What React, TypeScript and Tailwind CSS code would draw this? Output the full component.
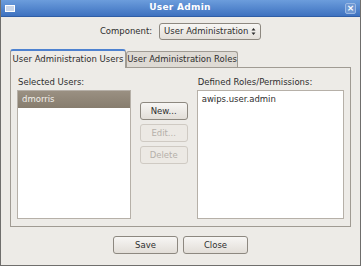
import React from "react";

const font = { fontFamily: '"DejaVu Sans", "Liberation Sans", sans-serif' };

function Btn({ label, disabled, w }: { label: string; disabled?: boolean; w: string }) {
  return (
    <div
      className={`${w} h-[18px] flex items-center justify-center rounded-[3px] border text-[8.5px] ${
        disabled
          ? "border-[#cfcac3] text-[#b5b0aa] bg-[#ece9e4]"
          : "border-[#8d8880] text-[#2e2e2e] bg-gradient-to-b from-[#f7f6f4] to-[#e2ded8]"
      }`}
    >
      {label}
    </div>
  );
}

export default function App() {
  return (
    <div style={font} className="w-[361px] h-[266px] bg-[#6f6e6c] p-[1px] pt-0 overflow-hidden">
      <div className="w-full h-full flex flex-col bg-[#edebe7]">
        {/* title bar */}
        <div className="h-[17px] flex items-center justify-between px-[4px] bg-gradient-to-b from-[#6c9ddc] to-[#3e72c0] border-b border-[#2f5ea6]">
          <div className="w-[10px] h-[7px] border border-white bg-[#c9d6ea]" />
          <div className="text-white font-bold text-[9px] tracking-[0.3px]">User Admin</div>
          <div className="w-[11px] h-[11px] rounded-[2px] bg-[#6e97d2] border border-[#9bb9e4] flex items-center justify-center text-white text-[9px] font-bold leading-none">
            ×
          </div>
        </div>
        {/* component row */}
        <div className="flex items-center justify-center gap-[7px] mt-[6px]">
          <span className="text-[8.5px] text-[#2e2e2e]">Component:</span>
          <div className="w-[102px] h-[17px] rounded-[3px] border border-[#8d8880] bg-gradient-to-b from-[#f7f6f4] to-[#e3dfd9] flex items-center justify-between px-[4px]">
            <span className="text-[8.5px] text-[#2e2e2e]">User Administration</span>
            <svg width="5" height="9" viewBox="0 0 5 9">
              <path d="M0.5 3.5 L2.5 1 L4.5 3.5Z M0.5 5.5 L2.5 8 L4.5 5.5Z" fill="#2e2e2e" />
            </svg>
          </div>
        </div>
        {/* tabs */}
        <div className="mx-[9px] mt-[9px] flex items-end">
          <div className="w-[116px] h-[19px] rounded-t-[3px] border border-b-0 border-[#a09b93] bg-[#edebe7] flex items-center justify-center text-[8.5px] text-[#2e2e2e] relative z-10 -mb-px border-t-[#4e82d0] border-t-2">
            User Administration Users
          </div>
          <div className="w-[112px] h-[16px] rounded-t-[3px] border border-b-0 border-[#a09b93] bg-[#dedad4] flex items-center justify-center text-[8.5px] text-[#2e2e2e]">
            User Administration Roles
          </div>
        </div>
        <div className="mx-[9px] h-[160px] border border-[#a09b93] flex px-[6px] pt-[8px] pb-[7px]">
          <div className="flex flex-col w-[115px]">
            <span className="text-[8.5px] text-[#2e2e2e] h-[14px] pl-px">Selected Users:</span>
            <div className="flex-1 bg-white border border-[#b6b0a8]">
              <div className="h-[17px] bg-gradient-to-b from-[#9a9082] to-[#877d6e] text-[#f2f0ec] text-[8.5px] flex items-center pl-[4px]">
                dmorris
              </div>
            </div>
          </div>
          <div className="flex flex-col gap-[4px] pt-[26px] pl-[9px] pr-[9px]">
            <Btn label="New..." w="w-[48px]" />
            <Btn label="Edit..." w="w-[48px]" disabled />
            <Btn label="Delete" w="w-[48px]" disabled />
          </div>
          <div className="flex flex-col w-[149px]">
            <span className="text-[8.5px] text-[#2e2e2e] h-[14px] pl-px">Defined Roles/Permissions:</span>
            <div className="flex-1 bg-white border border-[#b6b0a8]">
              <div className="h-[17px] text-[#2e2e2e] text-[8.5px] flex items-center pl-[4px]">awips.user.admin</div>
            </div>
          </div>
        </div>
        <div className="flex justify-center gap-[5px] mt-[9px]">
          <Btn label="Save" w="w-[65px]" />
          <Btn label="Close" w="w-[65px]" />
        </div>
      </div>
    </div>
  );
}
